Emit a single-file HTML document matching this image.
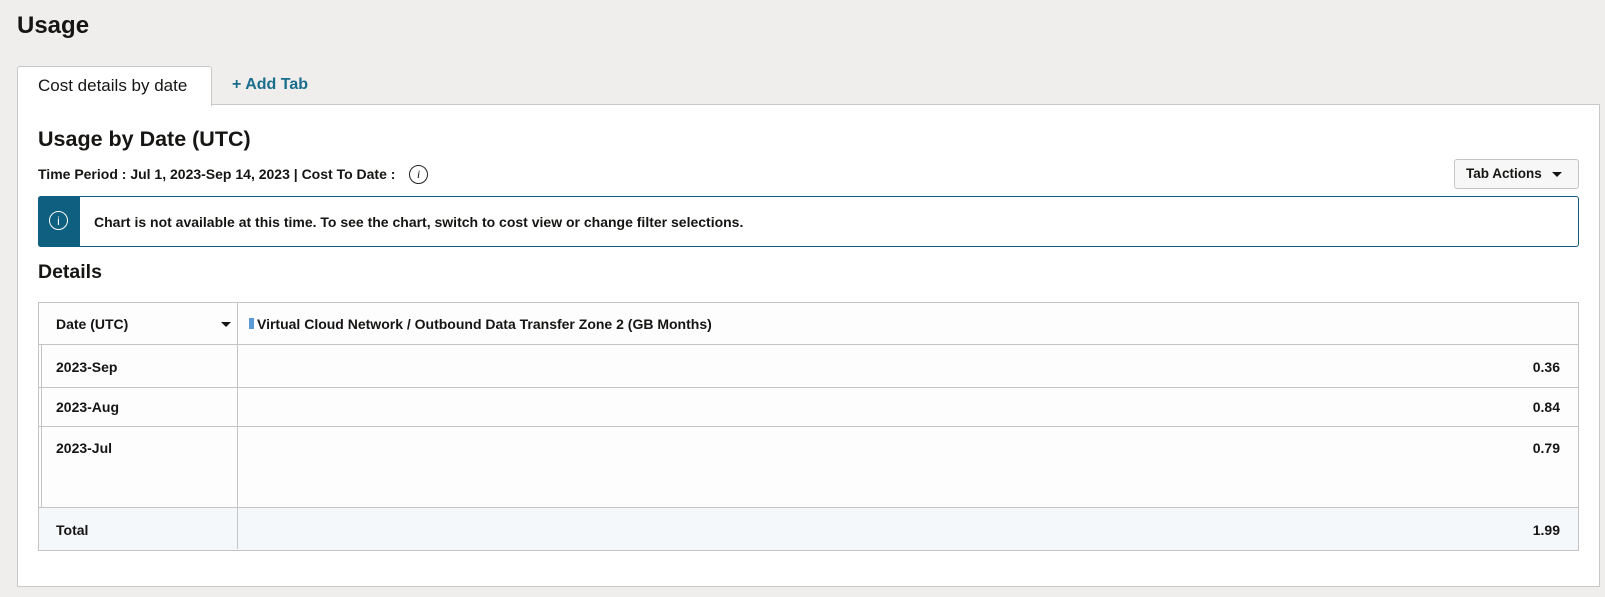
<!DOCTYPE html>
<html><head><style>
body{margin:0;width:1605px;height:597px;background:#efeeec;font-family:"Liberation Sans",Arial,sans-serif;color:#161513;position:relative;overflow:hidden}
.a{position:absolute}
.b{font-weight:bold}
.t{font-size:14px;font-weight:bold}
.tri{position:absolute;width:0;height:0;border-left:5px solid transparent;border-right:5px solid transparent;border-top:5px solid #161513}
</style></head><body>
<div class="a b" style="left:17px;top:12px;font-size:24px">Usage</div>
<div class="a" style="left:17px;top:104px;width:1581px;height:481px;background:#fff;border:1px solid #c8c8c8"></div>
<div class="a" style="left:17px;top:66px;width:193px;height:39px;background:#fff;border:1px solid #c8c8c8;border-bottom:none;border-radius:3px 3px 0 0"></div>
<div class="a" style="left:38px;top:76px;font-size:17px">Cost details by date</div>
<div class="a b" style="left:232px;top:76px;font-size:16px;color:#1a6d8c">+ Add Tab</div>
<div class="a b" style="left:38px;top:127px;font-size:21.5px">Usage by Date (UTC)</div>
<div class="a t" style="left:38px;top:166px">Time Period : Jul 1, 2023-Sep 14, 2023 | Cost To Date :</div>
<div class="a" style="left:409px;top:165px;width:17px;height:17px;border:1.3px solid #222;border-radius:50%;font:italic 12px 'Liberation Serif',serif;text-align:center;line-height:17px">i</div>
<div class="a" style="left:1454px;top:159px;width:123px;height:28px;border:1px solid #c4c4c4;border-radius:3px;background:#f7f7f7"></div>
<div class="a b" style="left:1466px;top:166px;font-size:13.5px">Tab Actions</div>
<div class="tri" style="left:1552px;top:172px"></div>
<div class="a" style="left:38px;top:196px;width:1539px;height:49px;border:1px solid #0f5b78;border-radius:3px;background:#fff"></div>
<div class="a" style="left:38px;top:196px;width:42px;height:51px;background:#0f5f80;border-radius:3px 0 0 3px"></div>
<div class="a" style="left:49px;top:211px;width:17px;height:17px;border:1.3px solid #fff;border-radius:50%;color:#fff;font:12px 'Liberation Sans';text-align:center;line-height:18px">i</div>
<div class="a t" style="left:94px;top:214px">Chart is not available at this time. To see the chart, switch to cost view or change filter selections.</div>
<div class="a b" style="left:38px;top:261px;font-size:19.5px">Details</div>
<div class="a" style="left:38px;top:302px;width:1539px;height:247px;border:1px solid #c4c4c4;background:#fdfdfe"></div>
<div class="a" style="left:39px;top:344px;width:1539px;height:1px;background:#c4c4c4"></div>
<div class="a" style="left:39px;top:387px;width:1539px;height:1px;background:#c4c4c4"></div>
<div class="a" style="left:39px;top:426px;width:1539px;height:1px;background:#c4c4c4"></div>
<div class="a" style="left:39px;top:507px;width:1539px;height:42px;background:#f4f8fb;border-top:1px solid #c4c4c4"></div>
<div class="a" style="left:237px;top:303px;width:1px;height:246px;background:#c4c4c4"></div>
<div class="a" style="left:41px;top:345px;width:1px;height:162px;background:#c4c4c4"></div>
<div class="a t" style="left:56px;top:316px">Date (UTC)</div>
<div class="tri" style="left:221px;top:322px"></div>
<div class="a" style="left:249px;top:318px;width:5px;height:11px;background:#5b9bd5"></div>
<div class="a t" style="left:257px;top:316px">Virtual Cloud Network / Outbound Data Transfer Zone 2 (GB Months)</div>
<div class="a t" style="left:56px;top:359px">2023-Sep</div>
<div class="a t" style="left:56px;top:399px">2023-Aug</div>
<div class="a t" style="left:56px;top:440px">2023-Jul</div>
<div class="a t" style="left:56px;top:522px">Total</div>
<div class="a t" style="right:45px;top:359px">0.36</div>
<div class="a t" style="right:45px;top:399px">0.84</div>
<div class="a t" style="right:45px;top:440px">0.79</div>
<div class="a t" style="right:45px;top:522px">1.99</div>
</body></html>
